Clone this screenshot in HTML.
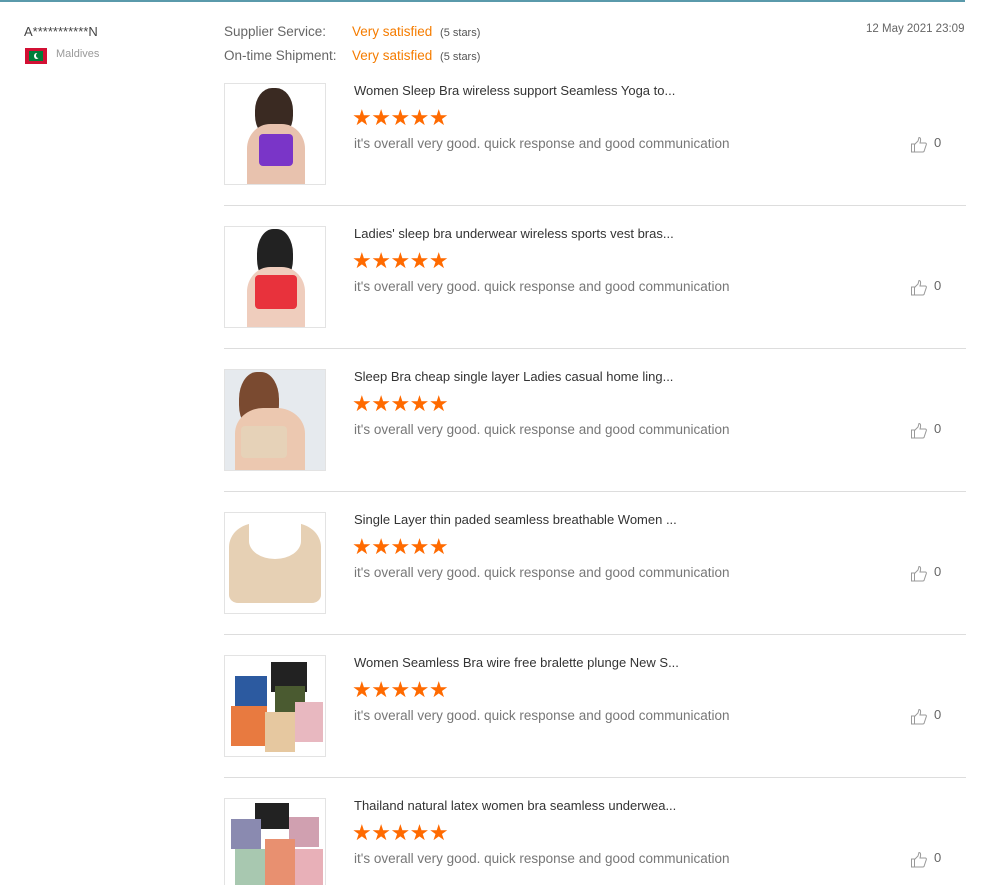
<!DOCTYPE html>
<html><head><meta charset="utf-8"><style>
*{margin:0;padding:0;box-sizing:border-box}
html,body{width:991px;height:885px;overflow:hidden}
body{background:#fff;font-family:"Liberation Sans",sans-serif;position:relative}
.top{position:absolute;left:0;top:0;width:965px;height:2px;background:#5a9aab}
.a{position:absolute;white-space:nowrap}
.row{position:absolute;left:224px;width:742px;height:143px}
.img{position:absolute;left:0;top:0;width:102px;height:102px;border:1px solid #e3e3e3;overflow:hidden;background:#fff}
.t{position:absolute;left:130px;top:0;font-size:13px;color:#333}
.st{position:absolute;left:128px;top:25px;color:#ff6a00;font-size:22px;letter-spacing:-0.5px;line-height:20px}
.d{position:absolute;left:130px;top:53px;font-size:13.5px;color:#777}
.th{position:absolute;left:686px;top:53px}
.z{position:absolute;left:710px;top:52px;font-size:13px;color:#666}
.sep{position:absolute;left:0;top:122px;width:742px;height:1px;background:#ddd}
</style></head><body>
<div class="top"></div>
<div class="a" style="left:24px;top:24px;font-size:13px;color:#444">A***********N</div>
<div class="a" style="left:25px;top:48px;width:22px;height:16px;background:#d21034"><div style="position:absolute;left:4px;top:3px;width:14px;height:10px;background:#007e3a"></div><div style="position:absolute;left:9px;top:5px;width:5px;height:6px;border-radius:50%;background:#fff"></div><div style="position:absolute;left:11px;top:5px;width:4px;height:5px;border-radius:50%;background:#007e3a"></div></div>
<div class="a" style="left:56px;top:48px;font-size:11px;color:#999">Maldives</div>
<div class="a" style="left:224px;top:24px;font-size:13.5px;color:#666">Supplier Service:</div>
<div class="a" style="left:224px;top:48px;font-size:13.5px;color:#666">On-time Shipment:</div>
<div class="a" style="left:352px;top:24px;font-size:13.5px;color:#f57c00">Very satisfied <span style="font-size:11px;color:#555;margin-left:4px">(5 stars)</span></div>
<div class="a" style="left:352px;top:48px;font-size:13.5px;color:#f57c00">Very satisfied <span style="font-size:11px;color:#555;margin-left:4px">(5 stars)</span></div>
<div class="a" style="left:866px;top:23px;font-size:11.5px;color:#666">12 May 2021 23:09</div>

<div class="row" style="top:83px"><div class="img"><div style="position:absolute;left:30px;top:4px;width:38px;height:50px;border-radius:45%;background:#3a2a22"></div><div style="position:absolute;left:22px;top:40px;width:58px;height:62px;border-radius:40% 40% 0 0;background:#e8c2ae"></div><div style="position:absolute;left:34px;top:50px;width:34px;height:32px;background:#7a35c8;border-radius:4px"></div></div><div class="t">Women Sleep Bra wireless support Seamless Yoga to...</div><div class="st">★★★★★</div><div class="d">it's overall very good. quick response and good communication</div><div class="th"><svg width="18" height="18" viewBox="0 0 18 18" fill="none" stroke="#999" stroke-width="1"><rect x="1.5" y="8" width="3" height="8"/><path d="M4.5 8.5 L8 5 L9 1.5 Q11 1.5 10.5 5 L10 7 L15.5 7 Q17 7.5 16 9.5 L14 15.5 Q13.5 16 12.5 16 L4.5 16"/></svg></div><div class="z">0</div><div class="sep"></div></div>

<div class="row" style="top:226px"><div class="img"><div style="position:absolute;left:32px;top:2px;width:36px;height:55px;border-radius:45%;background:#222"></div><div style="position:absolute;left:22px;top:40px;width:58px;height:62px;border-radius:40% 40% 0 0;background:#efcdbd"></div><div style="position:absolute;left:30px;top:48px;width:42px;height:34px;background:#e8323c;border-radius:4px"></div></div><div class="t">Ladies' sleep bra underwear wireless sports vest bras...</div><div class="st">★★★★★</div><div class="d">it's overall very good. quick response and good communication</div><div class="th"><svg width="18" height="18" viewBox="0 0 18 18" fill="none" stroke="#999" stroke-width="1"><rect x="1.5" y="8" width="3" height="8"/><path d="M4.5 8.5 L8 5 L9 1.5 Q11 1.5 10.5 5 L10 7 L15.5 7 Q17 7.5 16 9.5 L14 15.5 Q13.5 16 12.5 16 L4.5 16"/></svg></div><div class="z">0</div><div class="sep"></div></div>

<div class="row" style="top:369px"><div class="img" style="background:#e6eaee"><div style="position:absolute;left:14px;top:2px;width:40px;height:60px;border-radius:45%;background:#7a4a30"></div><div style="position:absolute;left:10px;top:38px;width:70px;height:64px;border-radius:40% 40% 0 0;background:#ecc8b0"></div><div style="position:absolute;left:16px;top:56px;width:46px;height:32px;background:#e6d2b8;border-radius:4px"></div></div><div class="t">Sleep Bra cheap single layer Ladies casual home ling...</div><div class="st">★★★★★</div><div class="d">it's overall very good. quick response and good communication</div><div class="th"><svg width="18" height="18" viewBox="0 0 18 18" fill="none" stroke="#999" stroke-width="1"><rect x="1.5" y="8" width="3" height="8"/><path d="M4.5 8.5 L8 5 L9 1.5 Q11 1.5 10.5 5 L10 7 L15.5 7 Q17 7.5 16 9.5 L14 15.5 Q13.5 16 12.5 16 L4.5 16"/></svg></div><div class="z">0</div><div class="sep"></div></div>

<div class="row" style="top:512px"><div class="img"><div style="position:absolute;left:4px;top:10px;width:92px;height:80px;background:#e6d0b4;border-radius:30% 30% 10% 10%"></div><div style="position:absolute;left:24px;top:10px;width:52px;height:36px;background:#fff;border-radius:0 0 50% 50%"></div></div><div class="t">Single Layer thin paded seamless breathable Women ...</div><div class="st">★★★★★</div><div class="d">it's overall very good. quick response and good communication</div><div class="th"><svg width="18" height="18" viewBox="0 0 18 18" fill="none" stroke="#999" stroke-width="1"><rect x="1.5" y="8" width="3" height="8"/><path d="M4.5 8.5 L8 5 L9 1.5 Q11 1.5 10.5 5 L10 7 L15.5 7 Q17 7.5 16 9.5 L14 15.5 Q13.5 16 12.5 16 L4.5 16"/></svg></div><div class="z">0</div><div class="sep"></div></div>

<div class="row" style="top:655px"><div class="img"><div style="position:absolute;left:10px;top:20px;width:32px;height:30px;background:#2c5aa0"></div><div style="position:absolute;left:46px;top:6px;width:36px;height:30px;background:#222"></div><div style="position:absolute;left:50px;top:30px;width:30px;height:28px;background:#4a5a30"></div><div style="position:absolute;left:6px;top:50px;width:36px;height:40px;background:#e87a40"></div><div style="position:absolute;left:40px;top:56px;width:30px;height:40px;background:#e6c8a0"></div><div style="position:absolute;left:70px;top:46px;width:28px;height:40px;background:#e8b8c0"></div></div><div class="t">Women Seamless Bra wire free bralette plunge New S...</div><div class="st">★★★★★</div><div class="d">it's overall very good. quick response and good communication</div><div class="th"><svg width="18" height="18" viewBox="0 0 18 18" fill="none" stroke="#999" stroke-width="1"><rect x="1.5" y="8" width="3" height="8"/><path d="M4.5 8.5 L8 5 L9 1.5 Q11 1.5 10.5 5 L10 7 L15.5 7 Q17 7.5 16 9.5 L14 15.5 Q13.5 16 12.5 16 L4.5 16"/></svg></div><div class="z">0</div><div class="sep"></div></div>

<div class="row" style="top:798px"><div class="img"><div style="position:absolute;left:30px;top:4px;width:34px;height:26px;background:#222"></div><div style="position:absolute;left:6px;top:20px;width:30px;height:30px;background:#8a8ab0"></div><div style="position:absolute;left:64px;top:18px;width:30px;height:30px;background:#d0a0b0"></div><div style="position:absolute;left:10px;top:50px;width:30px;height:40px;background:#a8c8b0"></div><div style="position:absolute;left:40px;top:40px;width:30px;height:46px;background:#e89070"></div><div style="position:absolute;left:70px;top:50px;width:28px;height:40px;background:#e8b0b8"></div></div><div class="t">Thailand natural latex women bra seamless underwea...</div><div class="st">★★★★★</div><div class="d">it's overall very good. quick response and good communication</div><div class="th"><svg width="18" height="18" viewBox="0 0 18 18" fill="none" stroke="#999" stroke-width="1"><rect x="1.5" y="8" width="3" height="8"/><path d="M4.5 8.5 L8 5 L9 1.5 Q11 1.5 10.5 5 L10 7 L15.5 7 Q17 7.5 16 9.5 L14 15.5 Q13.5 16 12.5 16 L4.5 16"/></svg></div><div class="z">0</div></div>
</body></html>
